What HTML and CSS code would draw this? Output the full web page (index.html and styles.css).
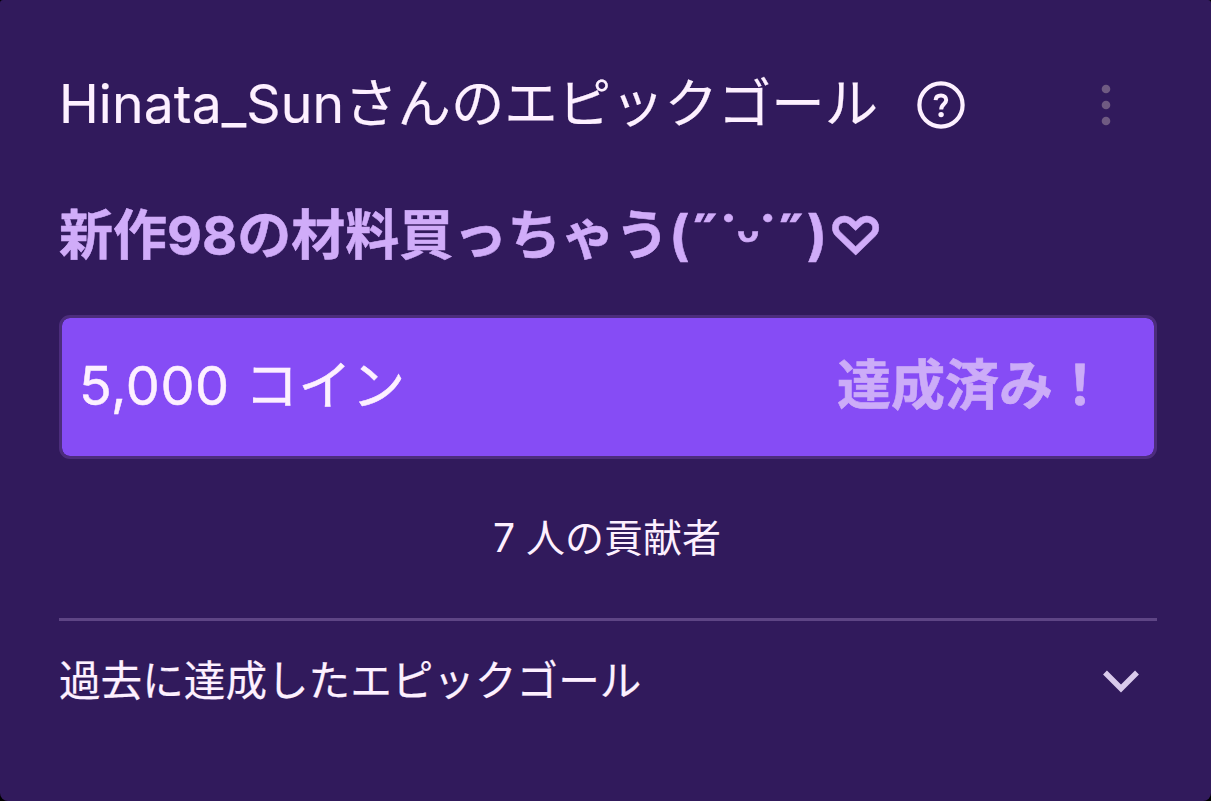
FILE: index.html
```html
<!DOCTYPE html>
<html lang="ja">
<head>
    <meta charset="UTF-8">
    <meta name="viewport" content="width=device-width, initial-scale=1.0">
    <title>エピックゴール</title>
    <link rel="stylesheet" href="styles.css">
</head>
<body>

    <div class="goalCard">
        <div class="header">
            <h1 class="title"><span class="user">Hinata_Sun</span>さんのエピックゴール</h1>
            <svg class="help" viewBox="0 0 48 48">
                <circle cx="24" cy="24" r="21.6" />
                <path d="M18.6 19.2C18.8 16.4 20.8 14.6 24 14.6C27.2 14.6 29.2 16.4 29.2 19.1C29.2 23 24.2 23 24.2 28.4" />
                <circle class="dot" cx="24.1" cy="33.6" r="2.7" />
            </svg>
            <svg class="more" viewBox="0 0 10 42">
                <circle cx="5" cy="5" r="4.3" />
                <circle cx="5" cy="21" r="4.3" />
                <circle cx="5" cy="37" r="4.3" />
            </svg>
        </div>

        <h2 class="goalName">新作98の材料買っちゃう<span class="face">(˝˙ᵕ˙˝)</span><span class="heart">♡</span></h2>

        <div class="progress">
            <span class="coins"><span class="num">5,000</span> コイン</span>
            <span class="done">達成済み！</span>
        </div>

        <p class="people">7 人の貢献者</p>

        <div class="history">
            <span class="label">過去に達成したエピックゴール</span>
            <svg class="arrow" viewBox="0 0 36 24">
                <path d="M2 2.5L18 18.5L34 2.5" />
            </svg>
        </div>
    </div>

</body>
</html>
```
FILE: styles.css
```css
* {
    box-sizing: border-box;
}
body {
    margin: 0;
    background: #000;
    font-family: Inter, "Noto Sans CJK JP", sans-serif;
    color: #fdf0ff;
}
h1, h2, p {
    margin: 0;
    font-weight: 400;
    white-space: nowrap;
}
.goalCard {
    height: 801px;
    padding: 65px 54px 0 59px;
    border-radius: 3px 3px 8px 8px;
    background: #311a5c;
}

.header {
    display: flex;
    align-items: center;
    height: 80px;
}
.title {
    width: 858px;
    font-size: 53.4px;
    line-height: 78px;
    padding-bottom: 2px;
    -webkit-text-stroke: .2px #fdf0ff;
}
.title .user {
    font-size: 53.5px;
    letter-spacing: .1px;
}
.help {
    width: 48px;
    height: 48px;
    fill: none;
    stroke: #fdf0ff;
    stroke-width: 4.2;
}
.help path {
    stroke-width: 4;
}
.help .dot {
    fill: #fdf0ff;
    stroke: none;
}
.more {
    width: 10px;
    height: 42px;
    margin-left: auto;
    margin-right: 46px;
    fill: #6f5a82;
}

.goalName {
    height: 80px;
    margin-top: 51px;
    font-size: 54px;
    line-height: 80px;
    font-weight: 700;
    color: #d0acf9;
    -webkit-text-stroke: .5px #d0acf9;
}
.goalName .face {
    letter-spacing: .7px;
}
.goalName .heart {
    -webkit-text-stroke: .5px #d0acf9;
}

.progress {
    display: flex;
    justify-content: space-between;
    height: 144px;
    margin-top: 39px;
    padding: 28px 47px 0 17px;
    border: 3px solid #4c2d7c;
    border-radius: 11px;
    background: #864cf5;
    background-clip: padding-box;
    font-size: 53.5px;
    line-height: 80px;
}
.coins {
    -webkit-text-stroke: .5px #fdf0ff;
}
.coins .num {
    font-size: 54px;
    letter-spacing: .6px;
}
.done {
    font-size: 54px;
    font-weight: 700;
    color: #ccacf8;
    -webkit-text-stroke: .6px #ccacf8;
}

.people {
    margin-top: 49px;
    padding-right: 2px;
    font-size: 39px;
    line-height: 60px;
    text-align: center;
}

.history {
    display: flex;
    justify-content: space-between;
    align-items: center;
    height: 125px;
    margin-top: 50px;
    padding-right: 18px;
    border-top: 3px solid #5e4585;
    font-size: 41.6px;
}
.history .label {
    padding-bottom: 8px;
    -webkit-text-stroke: .2px #fdf0ff;
}
.arrow {
    width: 36px;
    height: 24px;
    fill: none;
    stroke: #d9caeb;
    stroke-width: 5.5;
}
```
